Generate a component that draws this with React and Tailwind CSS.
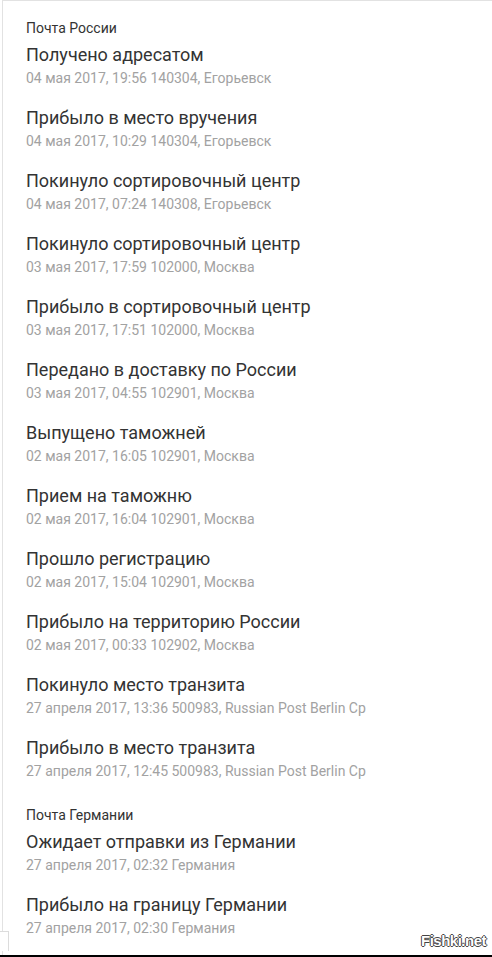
import React from 'react';

const russia = [
  ['Получено адресатом', '04 мая 2017, 19:56 140304, Егорьевск'],
  ['Прибыло в место вручения', '04 мая 2017, 10:29 140304, Егорьевск'],
  ['Покинуло сортировочный центр', '04 мая 2017, 07:24 140308, Егорьевск'],
  ['Покинуло сортировочный центр', '03 мая 2017, 17:59 102000, Москва'],
  ['Прибыло в сортировочный центр', '03 мая 2017, 17:51 102000, Москва'],
  ['Передано в доставку по России', '03 мая 2017, 04:55 102901, Москва'],
  ['Выпущено таможней', '02 мая 2017, 16:05 102901, Москва'],
  ['Прием на таможню', '02 мая 2017, 16:04 102901, Москва'],
  ['Прошло регистрацию', '02 мая 2017, 15:04 102901, Москва'],
  ['Прибыло на территорию России', '02 мая 2017, 00:33 102902, Москва'],
  ['Покинуло место транзита', '27 апреля 2017, 13:36 500983, Russian Post Berlin Cp'],
  ['Прибыло в место транзита', '27 апреля 2017, 12:45 500983, Russian Post Berlin Cp'],
];

const germany = [
  ['Ожидает отправки из Германии', '27 апреля 2017, 02:32 Германия'],
  ['Прибыло на границу Германии', '27 апреля 2017, 02:30 Германия'],
];

const Event = ({ title, meta }) => (
  <div className="pb-[17px]">
    <div className="text-[18px] leading-[26px] text-[#333]">{title}</div>
    <div className="text-[14px] leading-[20px] text-[#a2a2a2]">{meta}</div>
  </div>
);

const Section = ({ label, items, className = '' }) => (
  <div className={className}>
    <div className="text-[14px] leading-[20px] text-[#333] mb-[4px]">{label}</div>
    {items.map(([t, m], i) => (
      <Event key={i} title={t} meta={m} />
    ))}
  </div>
);

export default function App() {
  return (
    <div className="relative w-[492px] h-[957px] bg-white overflow-hidden flex flex-col font-['Roboto','Liberation_Sans',sans-serif]">
      <div className="flex-1 ml-[2px] border-l border-t border-[#e2e2e2] pl-[23px] pt-[17px]">
        <Section label="Почта России" items={russia} />
        <Section label="Почта Германии" items={germany} className="mt-[7px]" />
      </div>
      <div className="h-[6px] bg-black" />

      {/* bottom-left notch from the cropped page */}
      <div className="absolute left-0 bottom-[6px] w-[9px] h-[20px] bg-white border-t border-r border-[#dcdcdc]" />

      {/* watermark */}
      <div className="absolute right-[6px] bottom-[9px] text-[15px] leading-none font-bold tracking-[-0.5px] text-white font-['Liberation_Sans',sans-serif] [text-shadow:1px_0_0_#444,-1px_0_0_#444,0_1px_0_#444,0_-1px_0_#444]">
        Fishki.net
      </div>
    </div>
  );
}
